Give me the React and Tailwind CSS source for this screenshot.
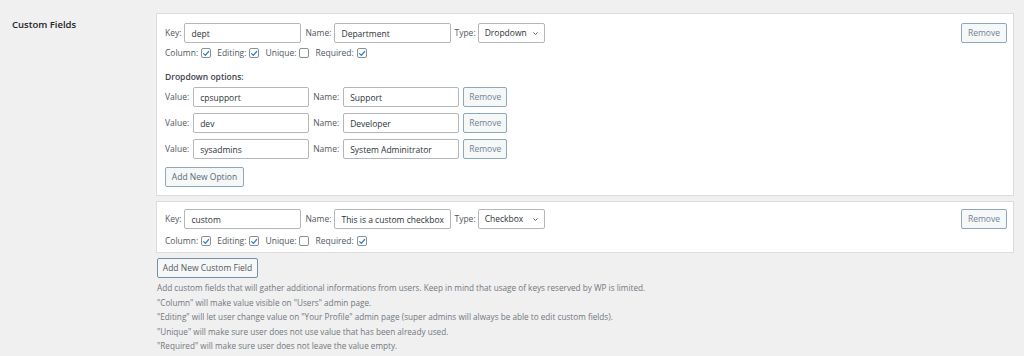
import React from 'react';

const font = { fontFamily: '"Open Sans", "Noto Sans", sans-serif' };

function Check({ checked }) {
  return (
    <span className="inline-flex h-[10px] w-[10px] items-center justify-center rounded-[2px] border border-[#8c8f94] bg-white">
      {checked && (
        <svg viewBox="0 0 10 10" className="h-[9px] w-[9px]">
          <path d="M2 5.2 L4.2 7.4 L8.3 2.5" fill="none" stroke="#3582c4" strokeWidth="1.6" strokeLinecap="round" strokeLinejoin="round" />
        </svg>
      )}
    </span>
  );
}

function TextInput({ value, width }) {
  return (
    <input
      readOnly
      value={value}
      className={`h-[20px] ${width} rounded-[2px] border border-[#b4b7ba] bg-white px-[6px] text-[8.5px] text-[#2c3338] outline-none`}
    />
  );
}

function SmallButton({ children, className = '' }) {
  return (
    <button className={`h-[20px] rounded-[2px] border border-[#8fa7bc] bg-[#f6f7f7] text-[8.5px] text-[#6f8498] ${className}`}>
      {children}
    </button>
  );
}

function TypeSelect({ label }) {
  return (
    <div className="flex h-[20px] w-[67px] items-center justify-between rounded-[2px] border border-[#b4b7ba] bg-white pl-[6px] pr-[5px] text-[8.5px] text-[#2c3338]">
      <span>{label}</span>
      <svg viewBox="0 0 10 10" className="h-[7px] w-[7px]">
        <path d="M2 3.5 L5 6.5 L8 3.5" fill="none" stroke="#50575e" strokeWidth="1.4" />
      </svg>
    </div>
  );
}

function FieldRow({ keyValue, name, type }) {
  return (
    <div className="flex h-[20px] items-center">
      <span className="mr-[3px]">Key:</span>
      <TextInput value={keyValue} width="w-[117px]" />
      <span className="ml-[4px] mr-[3px]">Name:</span>
      <TextInput value={name} width="w-[117px]" />
      <span className="ml-[3px] mr-[2px]">Type:</span>
      <TypeSelect label={type} />
      <SmallButton className="ml-auto w-[46px]">Remove</SmallButton>
    </div>
  );
}

function Flags({ column, editing, unique, required }) {
  return (
    <div className="flex h-[12px] items-center">
      <span className="mr-[3px]">Column:</span>
      <Check checked={column} />
      <span className="ml-[6px] mr-[3px]">Editing:</span>
      <Check checked={editing} />
      <span className="ml-[6px] mr-[3px]">Unique:</span>
      <Check checked={unique} />
      <span className="ml-[6px] mr-[3px]">Required:</span>
      <Check checked={required} />
    </div>
  );
}

function OptionRow({ value, name }) {
  return (
    <div className="flex h-[20px] items-center">
      <span className="mr-[4px]">Value:</span>
      <TextInput value={value} width="w-[116px]" />
      <span className="ml-[4px] mr-[4px]">Name:</span>
      <TextInput value={name} width="w-[116px]" />
      <SmallButton className="ml-[4px] w-[44px]">Remove</SmallButton>
    </div>
  );
}

export default function App() {
  const options = [
    { value: 'cpsupport', name: 'Support' },
    { value: 'dev', name: 'Developer' },
    { value: 'sysadmins', name: 'System Adminitrator' },
  ];

  return (
    <div className="flex h-[356px] w-[1024px] bg-[#f0f0f1] text-[8.5px] text-[#50575e]" style={font}>
      <div className="w-[156px] shrink-0 pl-[12px] pt-[18px] text-[9.5px] font-semibold text-[#1d2327]">
        Custom Fields
      </div>

      <div className="w-[858px] pt-[13px]">
        {/* First field: dropdown */}
        <div className="border border-[#dcdcde] bg-white pb-[8px] pl-[8px] pr-[6px] pt-[9px]">
          <FieldRow keyValue="dept" name="Department" type="Dropdown" />
          <div className="mt-[4px]">
            <Flags column editing unique={false} required />
          </div>
          <div className="mt-[12px] flex h-[12px] items-center font-semibold text-[#3c434a]">Dropdown options:</div>
          <div className="mt-[4px] flex flex-col gap-[6px]">
            {options.map(o => (
              <OptionRow key={o.value} value={o.value} name={o.name} />
            ))}
          </div>
          <SmallButton className="mt-[8px] w-[79px] text-[#55697b]">Add New Option</SmallButton>
        </div>

        {/* Second field: checkbox */}
        <div className="mt-[5px] border border-[#dcdcde] bg-white pb-[5px] pl-[8px] pr-[6px] pt-[7px]">
          <FieldRow keyValue="custom" name="This is a custom checkbox" type="Checkbox" />
          <div className="mt-[6px]">
            <Flags column editing unique={false} required />
          </div>
        </div>

        <button className="ml-[1px] mt-[5px] h-[20px] w-[101px] rounded-[2px] border border-[#7590a8] bg-[#f6f7f7] text-[8.5px] text-[#50575e]">
          Add New Custom Field
        </button>

        <div className="mt-[3px] pl-[1px] text-[8.2px] leading-[14.5px] text-[#72777c]">
          <p>Add custom fields that will gather additional informations from users. Keep in mind that usage of keys reserved by WP is limited.</p>
          <p>"Column" will make value visible on "Users" admin page.</p>
          <p>"Editing" will let user change value on "Your Profile" admin page (super admins will always be able to edit custom fields).</p>
          <p>"Unique" will make sure user does not use value that has been already used.</p>
          <p>"Required" will make sure user does not leave the value empty.</p>
        </div>
      </div>
    </div>
  );
}
